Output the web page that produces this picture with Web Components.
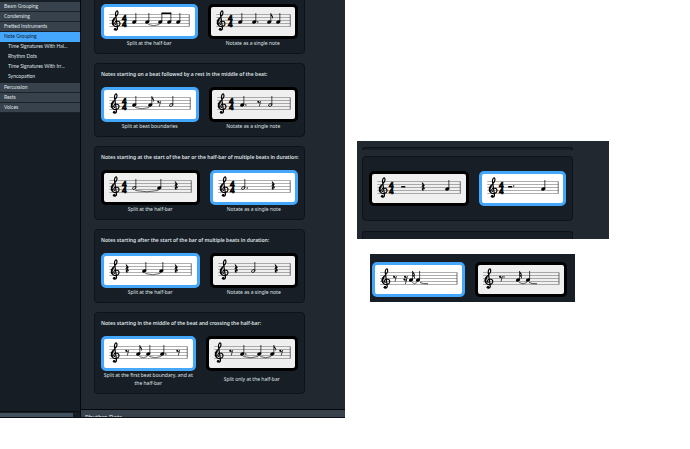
<!DOCTYPE html>
<html lang="en">
<head>
  <meta charset="UTF-8">
  <meta name="viewport" content="width=device-width, initial-scale=1.0">
  <title>Notation Options</title>
  <style>
    body {
      margin: 0;
      background: #fff;
      font-family: "Noto Sans", sans-serif;
      font-size: 5px;
      line-height: 8px;
      color: #dfe2e5;
      --accent: #45a7fb;
      --panel: #22282f;
      --card: #181e26;
      --line: #0e1318;
      --bar: #37424d;
    }
  </style>
</head>
<body>
  <options-page>
    <options-window slot="window">
      <category-list slot="sidebar"></category-list>
      <note-group columns="96fr 90fr">
        <notation-option checked width="90" score="clef:12 time:21 q:30 q:43 tie:43:56 beam:56:65 q:74">Split at the half-bar</notation-option>
        <notation-option width="84" score="clef:10 time:20 q:29 q.:43 e:58 q:67">Notate as a single note</notation-option>
      </note-group>
      <note-group columns="97fr 89fr">
        <span slot="title">Notes starting on a beat followed by a rest in the middle of the beat:</span>
        <notation-option checked width="91" score="clef:11 time:21 q:30 e:46 tie:30:46 r8:55 h:67">Split at beat boundaries</notation-option>
        <notation-option width="83" score="clef:10 time:20 q.:30 r8:47 h:58">Notate as a single note</notation-option>
      </note-group>
      <note-group columns="98fr 88fr">
        <span slot="title">Notes starting at the start of the bar or the half-bar of multiple beats in duration:</span>
        <notation-option width="92" score="clef:11 time:21 h:30 q:55 tie:30:55 r4:72">Split at the half-bar</notation-option>
        <notation-option checked width="82" score="clef:11 time:20 h.:30 r4:60">Notate as a single note</notation-option>
      </note-group>
      <note-group columns="98fr 88fr">
        <span slot="title">Notes starting after the start of the bar of multiple beats in duration:</span>
        <notation-option checked width="92" score="clef:11 r4:23 q:40 q:57 tie:40:57 r4:72">Split at the half-bar</notation-option>
        <notation-option width="82" score="clef:11 r4:23 h:40 r4:63">Notate as a single note</notation-option>
      </note-group>
      <note-group columns="94fr 92fr">
        <span slot="title">Notes starting in the middle of the beat and crossing the half-bar:</span>
        <notation-option checked width="88" score="clef:11 r8:23 e:34 q:44 q.:58 tie:34:44 tie:44:58 r8:74">Split at the first beat boundary, and at the half-bar</notation-option>
        <notation-option width="86" score="clef:10 r8:22 q.:33 q:50 e:63 tie:33:50 tie:50:63 r8:72">Split only at the half-bar</notation-option>
      </note-group>
      <span slot="next">Rhythm Dots</span>
    </options-window>

    <cropped-group slot="aside">
      <note-group untitled columns="99fr 87fr">
        <notation-option width="93" score="clef:11 time:20 r2:31 r4:51 q:75" label="Separate rests"></notation-option>
        <notation-option checked width="81" score="clef:11 time:20 r2.:28 q:61" label="Dotted rest"></notation-option>
      </note-group>
    </cropped-group>

    <note-group bare slot="aside" columns="93fr 92fr">
      <notation-option checked width="87" score="clef:11 r8:20 r16:31 s:36 q:43 tie:36:43 hold:45:53" label="Separate rests"></notation-option>
      <notation-option width="86" score="clef:11 r8.:23 s:40 q:50 tie:40:50 hold:51:59" label="Dotted rest"></notation-option>
    </note-group>
  </options-page>

  <script>
    class OptionsPage extends HTMLElement {
      constructor() {
        super();
        this.attachShadow({ mode: 'open' }).innerHTML = `
          <style>
            :host {
              display: grid;
              grid-template-columns: 1fr 1fr;
              align-items: start;
            }
            aside {
              display: flex;
              flex-direction: column;
              gap: 15px;
              padding-top: 141px;
            }
            ::slotted(cropped-group) {
              margin: 0 81px 0 12px;
            }
            ::slotted(note-group) {
              margin: 0 115px 0 25px;
            }
          </style>
          <slot name="window"></slot>
          <aside><slot name="aside"></slot></aside>
        `;
      }
    }

    class OptionsWindow extends HTMLElement {
      constructor() {
        super();
        this.attachShadow({ mode: 'open' }).innerHTML = `
          <style>
            :host {
              display: grid;
              grid-template-columns: 81px 1fr;
              background: var(--panel);
              border-bottom: 1px solid #0b0f13;
              overflow: hidden;
            }
            main {
              display: flex;
              flex-direction: column;
              min-width: 0;
            }
            /* the list is scrolled, so its first card starts above the edge */
            .cards {
              display: flex;
              flex-direction: column;
              gap: 9px;
              margin-top: -20px;
              padding: 0 40px 15px 13px;
            }
            h2 {
              margin: 0;
              height: 8px;
              padding: 3px 4px 0;
              box-sizing: border-box;
              border-top: 1px solid #06090c;
              background: var(--bar);
              font-size: 6px;
              font-weight: 500;
              line-height: 9px;
              overflow: hidden;
            }
          </style>
          <slot name="sidebar"></slot>
          <main>
            <div class="cards"><slot></slot></div>
            <h2><slot name="next"></slot></h2>
          </main>
        `;
      }
    }

    class CategoryList extends HTMLElement {
      constructor() {
        super();
        this.attachShadow({ mode: 'open' }).innerHTML = `
          <style>
            :host {
              display: flex;
              flex-direction: column;
              justify-content: space-between;
              background: #161d25;
              border-right: 1px solid #06090c;
              font-family: Lato, "Noto Sans", sans-serif;
              min-width: 0;
            }
            nav {
              padding-top: 2px;
            }
            a {
              display: block;
              padding-left: 4px;
              border-bottom: 1px solid #1a2129;
              background: var(--bar);
              color: inherit;
              line-height: 9px;
              text-decoration: none;
              white-space: nowrap;
            }
            a.current {
              background: var(--accent);
              border-color: var(--accent);
              color: #10202e;
            }
            .children {
              padding-bottom: 1px;
            }
            .children a {
              padding-left: 8px;
              background: none;
              border-color: transparent;
            }
            .track {
              border-top: 1px solid #0b0f13;
              padding: 1px 7px 0 0;
            }
            .thumb {
              height: 4px;
              background: #40515d;
            }
          </style>
          <nav>
            <a href="#beam">Beam Grouping</a>
            <a href="#condensing">Condensing</a>
            <a href="#fretted">Fretted Instruments</a>
            <a href="#notes" class="current">Note Grouping</a>
            <div class="children">
              <a href="#half">Time Signatures With Hal...</a>
              <a href="#dots">Rhythm Dots</a>
              <a href="#irregular">Time Signatures With Irr...</a>
              <a href="#syncopation">Syncopation</a>
            </div>
            <a href="#percussion">Percussion</a>
            <a href="#rests">Rests</a>
            <a href="#voices">Voices</a>
          </nav>
          <div class="track"><div class="thumb"></div></div>
        `;
      }
    }

    class CroppedGroup extends HTMLElement {
      constructor() {
        super();
        this.attachShadow({ mode: 'open' }).innerHTML = `
          <style>
            :host {
              display: block;
              padding: 6px 36px 0 5px;
              background: var(--panel);
            }
            .edge {
              box-sizing: border-box;
              background: var(--card);
              border: 1px solid var(--line);
              border-bottom: 0;
              border-radius: 3px 3px 0 0;
            }
            .before {
              height: 3px;
              margin-bottom: 6px;
            }
            .after {
              height: 8px;
              margin-top: 10px;
            }
          </style>
          <div class="edge before"></div>
          <slot></slot>
          <div class="edge after"></div>
        `;
      }
    }

    class NoteGroup extends HTMLElement {
      constructor() {
        super();
        this.attachShadow({ mode: 'open' }).innerHTML = `
          <style>
            :host {
              display: block;
              padding: 6px;
              background: var(--card);
              border: 1px solid var(--line);
              border-radius: 4px;
            }
            :host([untitled]) {
              padding: 14px 6px;
            }
            :host([bare]) {
              padding: 8px 8px 5px 2px;
              border: 0;
              border-radius: 0;
            }
            h3 {
              margin: 0 0 9px;
              min-height: 8px;
              font-size: 5px;
              font-weight: 600;
              line-height: 8px;
              white-space: nowrap;
            }
            :host([untitled]) h3,
            :host([bare]) h3 {
              display: none;
            }
            .options {
              display: grid;
              grid-template-columns: ${this.getAttribute('columns')};
              gap: 10px;
            }
          </style>
          <h3><slot name="title"></slot></h3>
          <div class="options"><slot></slot></div>
        `;

        // radios live in separate shadow roots, so keep them exclusive here
        this.addEventListener('option-change', (event) => {
          this.querySelectorAll('notation-option').forEach((option) => {
            option.radio.checked = option === event.target;
          });
        });
      }
    }

    const quarterRest = 'M-1 8.6 L1 11.2 Q-.6 12.6 1.3 14.8 Q-.9 14 -.3 16.6 Q-2.3 14.6 -.2 13.8 L-1.2 12.4 Q.4 11 -1 8.6Z';
    const clef = `
      <path d="M-.4 17.8C-2.2 16.8-1.6 14 .6 14c2.4 0 3.4 1.5 3.1 3.2-.5 2.4-3.8 3-5.6 1.8-2.5-1.7-2.2-4.7-.6-6.8 1.5-2 4-3.5 4.2-6 .1-1.6-.4-2.3-.8-2.3-1.1 0-1.900 2-1.600 4L1.2 20.5c.3 2-.8 2.800-1.800 2.700" fill="none" stroke="#000" stroke-width="1.2"/>
      <path d="M-2.8 17.8c-1.3-2-.8-4.2.8-6" fill="none" stroke="#000" stroke-width="1.8"/>
      <circle cx="-1" cy="22.3" r="1.4"/>`;

    const head = (x) => `<ellipse cx="${x}" cy="15" rx="2.2" ry="1.6" transform="rotate(-20 ${x} 15)"/>`;
    const stem = (x) => `<path d="M${x + 1.6} 15V6" stroke="#000" stroke-width=".7"/>`;
    const flag = (x, y) => `<path d="M${x + 1.6} ${y}q.3 1.7 1.7 2.7 1.3 1.5.1 3.5.4-2.2-1.8-3.4z"/>`;
    const dot = (x, y) => `<circle cx="${x}" cy="${y}" r=".7"/>`;

    const symbols = {
      clef: (x) => `<g transform="translate(${x})">${clef}</g>`,
      time: (x) => `<g font-family="Liberation Serif, serif" font-weight="700" font-size="9" text-anchor="middle" stroke="#000" stroke-width=".7"><text x="${x - 1}" y="13.5">4</text><text x="${x - 1}" y="19.5">4</text></g>`,
      q: (x) => head(x) + stem(x),
      'q.': (x) => head(x) + stem(x) + dot(x + 3.6, 15),
      e: (x) => head(x) + stem(x) + flag(x, 6),
      s: (x) => head(x) + stem(x) + flag(x, 5.5) + flag(x, 8),
      h: (x) => `<ellipse cx="${x}" cy="15" rx="1.8" ry="1.2" fill="none" stroke="#000" stroke-width=".8" transform="rotate(-25 ${x} 15)"/>` + stem(x),
      'h.': (x) => symbols.h(x) + dot(x + 4, 15),
      beam: (a, b) => head(a) + stem(a) + head(b) + stem(b) + `<path d="M${a + 1.3} 5.5H${b + 2}V7H${a + 1.3}z"/>`,
      tie: (a, b) => `<path d="M${a + 1} 17.5Q${(a + b) / 2} 20 ${b - 1} 17.5" fill="none" stroke="#000" stroke-width=".6"/>`,
      hold: (a, b) => `<path d="M${a} 17.5Q${a + 3} 19 ${b} 18.8" fill="none" stroke="#000" stroke-width=".7"/>`,
      r2: (x) => `<path d="M${x - 2} 12h4v1.5h-4z"/>`,
      'r2.': (x) => symbols.r2(x) + dot(x + 3.5, 12),
      r4: (x) => `<path transform="translate(${x})" d="${quarterRest}" stroke="#000" stroke-width=".8"/>`,
      r8: (x) => `<circle cx="${x - 1}" cy="11.8" r="1"/><path d="M${x - 1} 12.6Q${x + .8} 12.8 ${x + 1.4} 11.4L${x} 16.5" fill="none" stroke="#000" stroke-width=".7"/>`,
      'r8.': (x) => symbols.r8(x) + dot(x + 3, 12),
      r16: (x) => symbols.r8(x) + `<circle cx="${x - 1.6}" cy="14.6" r="1"/><path d="M${x - 1.6} 15.4L${x + .6} 14.5L${x - .6} 19" fill="none" stroke="#000" stroke-width=".7"/>`
    };

    class NotationOption extends HTMLElement {
      constructor() {
        super();
        const width = Number(this.getAttribute('width'));
        const end = width - 5;
        const lines = [7.5, 10.5, 13.5, 16.5, 19.5].map((y) => `M5 ${y}H${end}`).join('');
        const notes = this.getAttribute('score').split(' ').map((token) => {
          const [name, ...at] = token.split(':');
          return symbols[name](...at.map(Number));
        }).join('');
        const label = this.getAttribute('label');

        this.attachShadow({ mode: 'open' }).innerHTML = `
          <style>
            :host {
              display: block;
              min-width: 0;
            }
            label {
              display: grid;
              grid-template-rows: 35px 1fr;
              height: 100%;
              cursor: pointer;
            }
            input {
              grid-area: 1 / 1;
              appearance: none;
              box-sizing: border-box;
              width: 100%;
              height: 100%;
              margin: 0;
              border: 3px solid #000;
              border-radius: 5px;
              background: #efefef;
            }
            input:checked {
              border-color: var(--accent);
              background: #fff;
            }
            svg {
              grid-area: 1 / 1;
              display: block;
              box-sizing: border-box;
              width: 100%;
              height: 100%;
              padding: 3px;
              pointer-events: none;
            }
            .caption {
              align-self: center;
              text-align: center;
            }
          </style>
          <label>
            <input type="radio" ${label ? `aria-label="${label}"` : ''} ${this.hasAttribute('checked') ? 'checked' : ''}>
            <svg viewBox="0 0 ${width} 29" aria-hidden="true">
              <path d="${lines}" stroke="#777" stroke-width=".6"/>
              <path d="M${end} 7.5V19.5" stroke="#333" stroke-width=".7"/>
              ${notes}
            </svg>
            <span class="caption"><slot></slot></span>
          </label>
        `;
        this.radio = this.shadowRoot.querySelector('input');
        this.radio.addEventListener('change', () => {
          this.dispatchEvent(new CustomEvent('option-change', { bubbles: true }));
        });
      }
    }

    customElements.define('options-page', OptionsPage);
    customElements.define('options-window', OptionsWindow);
    customElements.define('category-list', CategoryList);
    customElements.define('cropped-group', CroppedGroup);
    customElements.define('note-group', NoteGroup);
    customElements.define('notation-option', NotationOption);
  </script>
</body>
</html>
